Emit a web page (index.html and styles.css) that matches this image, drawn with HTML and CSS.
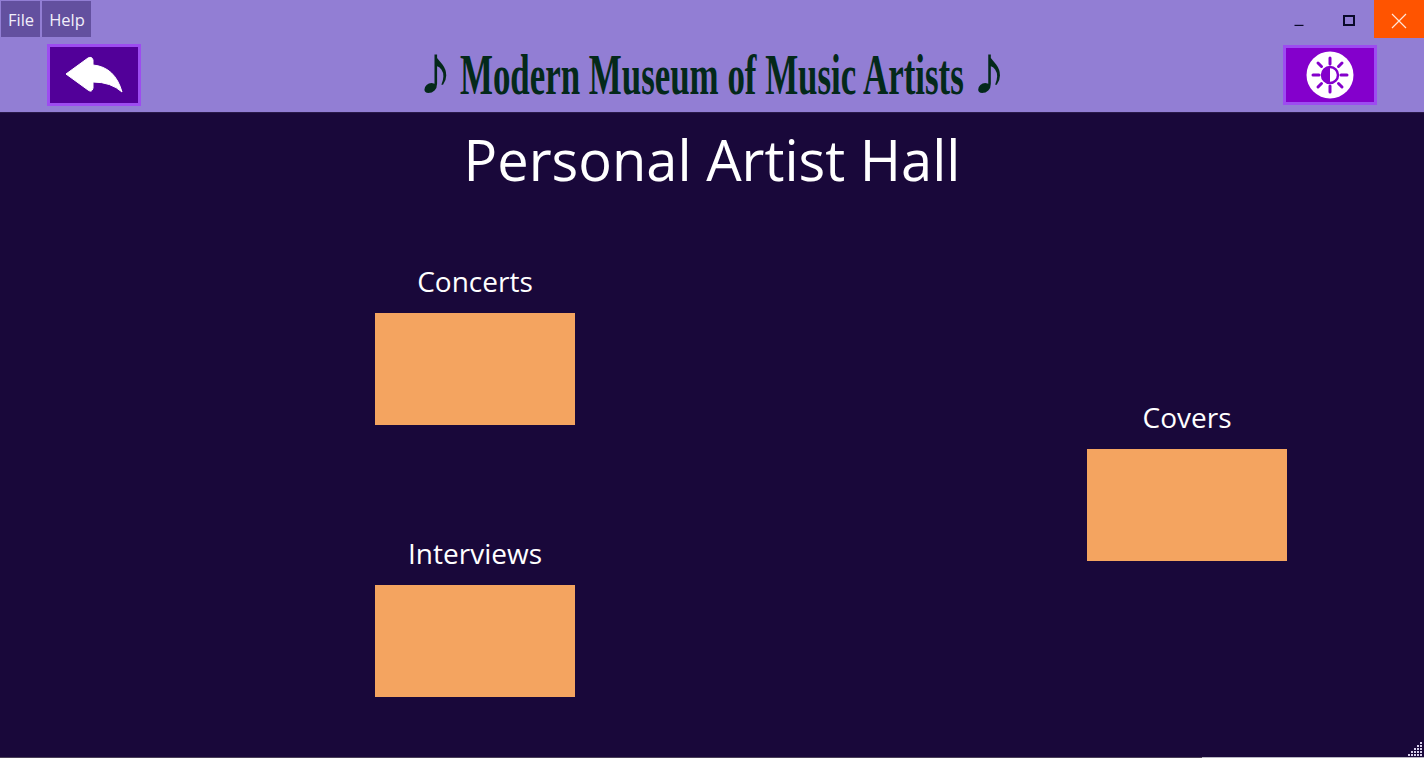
FILE: index.html
```html
<!DOCTYPE html>
<html lang="en">
<head>
  <meta charset="UTF-8" />
  <title>Personal Artist Hall</title>
  <link rel="stylesheet" href="styles.css">
</head>
<body>
  <div class="window">
    <header class="top">
      <div class="titlebar">
        <nav class="menu">
          <button class="menu-item">File</button>
          <button class="menu-item">Help</button>
        </nav>
        <div class="controls">
          <span class="ctl">
            <svg width="10" height="10" viewBox="0 0 10 10"><path d="M0.5 9.5h9" stroke="#0a0a2a" stroke-width="1.4"/></svg>
          </span>
          <span class="ctl">
            <svg width="12" height="12" viewBox="0 0 12 12"><rect x="1" y="1" width="10" height="9" fill="none" stroke="#0a0a2a" stroke-width="2"/></svg>
          </span>
          <span class="ctl ctl-close">
            <svg width="16" height="16" viewBox="0 0 16 16"><path d="M1 1l14 14M15 1L1 15" stroke="#ffe6d8" stroke-width="1.2"/></svg>
          </span>
        </div>
      </div>
      <div class="banner">
        <button class="tool tool-back">
          <svg width="58" height="38" viewBox="0 0 58 38">
            <path d="M1 18 L23 2 Q27 0 28 4 L28 9 Q50 11 57 36 Q46 26 28 26 L28 32 Q27 37 23 34 Z" fill="#fff" stroke="#fff" stroke-linejoin="round"/>
          </svg>
        </button>
        <h1 class="museum"><span class="museum-text"><span class="note note-left">♪</span> Modern Museum of Music Artists <span class="note note-right">♪</span></span></h1>
        <button class="tool tool-theme">
          <svg width="48" height="48" viewBox="0 0 48 48">
            <circle cx="24" cy="24" r="23.5" fill="#fff"/>
            <g stroke="#8400cc" stroke-width="3" stroke-linecap="round">
              <path d="M24 7v6M24 35v6M7 24h6M35 24h6M12 12l3.5 3.5M32.5 32.5l3.5 3.5M36 12l-3.5 3.5M15.5 32.5L12 36"/>
            </g>
            <circle cx="24" cy="24" r="8" fill="#fff" stroke="#8400cc" stroke-width="2.5"/>
            <path d="M24 16a8 8 0 0 0 0 16z" fill="#8400cc"/>
          </svg>
        </button>
      </div>
    </header>
    <main class="hall">
      <h2 class="hall-title">Personal Artist Hall</h2>
      <div class="rooms">
        <div class="room-col">
          <section class="room">
            <h3 class="room-name">Concerts</h3>
            <div class="room-box"></div>
          </section>
          <section class="room">
            <h3 class="room-name">Interviews</h3>
            <div class="room-box"></div>
          </section>
        </div>
        <div class="room-col room-col-right">
          <section class="room">
            <h3 class="room-name">Covers</h3>
            <div class="room-box"></div>
          </section>
        </div>
      </div>
      <svg class="grip" width="18" height="18" viewBox="0 0 18 18" fill="#d8d0ec">
        <rect x="14" y="3" width="2" height="2"/>
        <rect x="11" y="6" width="2" height="2"/><rect x="14" y="6" width="2" height="2"/>
        <rect x="8" y="9" width="2" height="2"/><rect x="11" y="9" width="2" height="2"/><rect x="14" y="9" width="2" height="2"/>
        <rect x="5" y="12" width="2" height="2"/><rect x="8" y="12" width="2" height="2"/><rect x="11" y="12" width="2" height="2"/><rect x="14" y="12" width="2" height="2"/>
        <rect x="2" y="15" width="2" height="2"/><rect x="5" y="15" width="2" height="2"/><rect x="8" y="15" width="2" height="2"/><rect x="11" y="15" width="2" height="2"/><rect x="14" y="15" width="2" height="2"/>
      </svg>
    </main>
    <div class="edge"></div>
  </div>
</body>
</html>
```

FILE: styles.css
```css
html, body {
  margin: 0;
  height: 100%;
  overflow: hidden;
}
body {
  font-family: "Open Sans", "Noto Sans", sans-serif;
  background-color: #19083a;
}
.window {
  height: 758px;
  display: flex;
  flex-direction: column;
}
.top {
  height: 113px;
  background-color: #927ed4;
  border-bottom: 1px solid #2a1a4a;
  box-sizing: border-box;
}
.titlebar {
  height: 38px;
  display: flex;
  justify-content: space-between;
}
.menu {
  display: flex;
  gap: 2px;
  padding: 1px 0 0 1px;
}
.menu-item {
  height: 36px;
  border: 0;
  padding: 0 6px 0 7px;
  background-color: #63509f;
  color: #f1eefa;
  font-family: inherit;
  font-size: 16.5px;
}
.controls {
  display: flex;
}
.ctl {
  width: 50px;
  height: 38px;
  padding-top: 4px;
  box-sizing: border-box;
  display: flex;
  align-items: center;
  justify-content: center;
}
.ctl-close {
  background-color: #ff5400;
}
.banner {
  height: 73px;
  display: flex;
  align-items: center;
  justify-content: space-between;
  padding: 0 47px 0 47px;
}
.tool {
  width: 94px;
  height: 62px;
  padding: 0;
  border: 3px solid #9d4cf0;
  display: flex;
  align-items: center;
  justify-content: center;
}
.tool-back {
  background-color: #520099;
}
.tool-theme {
  height: 60px;
  background-color: #8400cc;
}
.museum {
  margin: 0;
  font-family: "Liberation Serif", serif;
  font-size: 57px;
  font-weight: bold;
  line-height: 66px;
  color: #04291a;
  white-space: nowrap;
}
.museum-text {
  display: inline-block;
  transform: scaleX(0.612);
}
.note {
  display: inline-block;
  font-size: 70px;
  line-height: 60px;
  transform: scaleX(1.64);
}
.note-left {
  margin-right: 9px;
}
.note-right {
  margin-left: 9px;
}
.hall {
  flex: 1;
  position: relative;
  color: #fff;
}
.hall-title {
  margin: 0;
  padding-top: 8px;
  text-align: center;
  font-size: 56px;
  font-weight: 400;
  line-height: 76px;
}
.rooms {
  display: grid;
  grid-template-columns: 712px 712px;
  padding-top: 66px;
}
.room-col {
  padding-left: 375px;
  display: flex;
  flex-direction: column;
  gap: 110px;
}
.room-col-right {
  padding-top: 136px;
}
.room {
  width: 200px;
  text-align: center;
}
.room-name {
  margin: 0;
  font-size: 28px;
  font-weight: 400;
  line-height: 36px;
  padding-bottom: 14px;
}
.room-box {
  height: 112px;
  background-color: #f4a460;
}
.grip {
  position: absolute;
  right: 0;
  bottom: 0;
}
.edge {
  height: 1px;
  background: linear-gradient(to right, #4a4058 1202px, #b9b6c2 1202px);
}
```
